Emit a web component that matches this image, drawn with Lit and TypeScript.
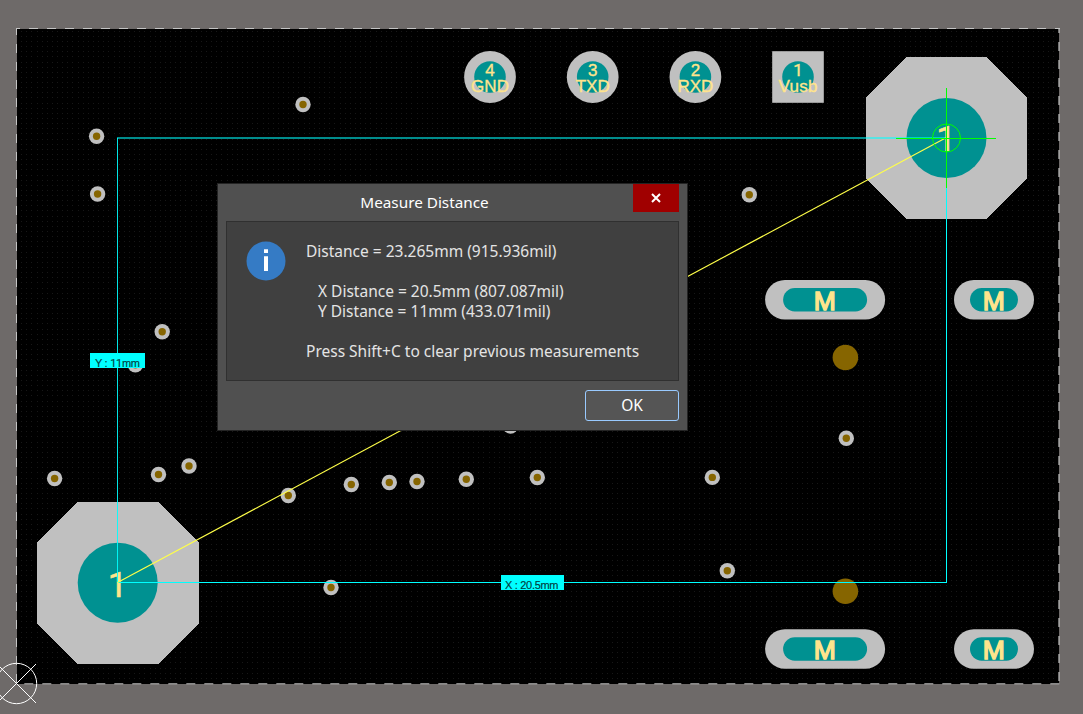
import { LitElement, html, svg, css } from "lit";
import { customElement } from "lit/decorators.js";

const VIAS: [number, number][] = [
  [303, 104.5], [96.6, 136.3], [97.6, 194], [749.3, 194.8], [162.2, 331.7],
  [135.4, 364.8], [510.5, 426], [846.3, 438.3], [54.6, 478.5], [158.5, 474.5],
  [189, 466], [288.3, 495.5], [351.3, 484.5], [389.3, 482.5], [417, 481.5],
  [466.3, 479.3], [537.3, 477.5], [712.3, 477.4], [727.3, 570.7], [331, 587.5],
];

const SLOTS: [number, number, number, number][] = [
  [825.1, 299.7, 120, 84], [994, 299.7, 80, 48],
  [825.1, 649, 120, 84], [994, 649, 80, 48],
];

const HEADER = [
  { x: 490, n: "4", name: "GND", w: 38 },
  { x: 592.7, n: "3", name: "TXD", w: 34 },
  { x: 695.4, n: "2", name: "RXD", w: 36 },
  { x: 798, n: "1", name: "Vusb", w: 39 },
];

// 5 mil snap grid, measured from the board origin
function gridPath(): string {
  const step = 5.136;
  let d = "";
  for (let j = 1; j < 128; j++) {
    const y = Math.floor(683.5 - j * step) + 0.5;
    if (y < 29) break;
    for (let i = 1; i < 203; i++) {
      d += `M${Math.floor(16.5 + i * step)} ${y}h1`;
    }
  }
  return d;
}

@customElement("pcb-board")
export class PcbBoard extends LitElement {
  static styles = css`
    :host { display: block; }
    svg { display: block; }
    text { font-family: "Liberation Sans", Arial, sans-serif; }
    .label { fill: #ffe48c; stroke: #ffe48c; stroke-width: 0.35; font-size: 17px; text-anchor: middle; }
    .slot { fill: #ffe48c; stroke: #ffe48c; stroke-width: 1.4; font-size: 26.5px; text-anchor: middle; }
    .big { fill: #ffe48c; stroke: #ffe48c; stroke-width: 0.5; font-size: 35px; }
    .one { font-family: Roboto, sans-serif; }
    .dim { fill: #003c3c; stroke: #003c3c; stroke-width: 0.15; font-size: 11px; }
    .copper { fill: #c0c0c0; }
    .hole { fill: #009191; }
    .drill { fill: #866500; }
    .edge { stroke: #c4c4c4; stroke-dasharray: 9 9; fill: none; }
    .measure { stroke: #00ffff; fill: none; }
    .cursor { stroke: #00ff00; fill: none; }
    .origin { stroke: #ffffff; fill: none; }
  `;

  render() {
    return html`
      <svg width="1083" height="714" viewBox="0 0 1083 714">
        <rect width="1083" height="714" fill="#6e6a69"></rect>
        <rect x="17" y="29" width="1042" height="655" fill="#000"></rect>
        <path d=${gridPath()} stroke="#171717" shape-rendering="crispEdges"></path>

        <path class="edge" d="M16 28.5H1060" stroke-dashoffset="5"></path>
        <path class="edge" d="M16.5 28V684" stroke-dashoffset="2"></path>
        <path class="edge" d="M24.3 683.8H1060"></path>
        <path class="edge" d="M1059 28V684" stroke-dashoffset="4" stroke-width="1.6" stroke-opacity="0.75"></path>

        ${VIAS.map(([x, y]) => svg`
          <circle class="copper" cx=${x} cy=${y} r="7.7"></circle>
          <circle class="drill" cx=${x} cy=${y} r="3.7"></circle>`)}
        <circle class="drill" cx="845.4" cy="357.5" r="12.8"></circle>
        <circle class="drill" cx="845.4" cy="591.2" r="12.8"></circle>

        ${HEADER.map((p) => svg`
          ${p.n === "1"
            ? svg`<rect class="copper" x="772.2" y="51.2" width="51.6" height="51.6"></rect>`
            : svg`<circle class="copper" cx=${p.x} cy="77" r="25.9"></circle>`}
          <circle class="hole" cx=${p.x} cy="77" r="15.8"></circle>
          <text class=${p.n === "1" ? "label one" : "label"} x=${p.x} y="75.8">${p.n}</text>
          <text class="label" x=${p.x} y="91.6" textLength=${p.w}>${p.name}</text>`)}

        ${SLOTS.map(([x, y, w, h]) => svg`
          <rect class="copper" x=${x - w / 2} y=${y - 19.8} width=${w} height="39.6" rx="19.8"></rect>
          <rect class="hole" x=${x - h / 2} y=${y - 11.7} width=${h} height="23.4" rx="11.7"></rect>
          <text class="slot" x=${x - 0.3} y=${y + 10.4}>M</text>`)}

        <path class="copper" shape-rendering="crispEdges" d="M906.5 57H986.5L1027 97.5V178.5L986.5 219H906.5L866 178.5V97.5Z"></path>
        <circle class="hole" cx="946.5" cy="138" r="40"></circle>
        <text class="big one" x="936.2" y="151">1</text>
        <path class="copper" shape-rendering="crispEdges" d="M77.5 502H158.5L199 542.5V623.5L158 664H77.5L37 624V542.5Z"></path>
        <circle class="hole" cx="117.7" cy="582.7" r="40"></circle>
        <text class="big one" x="107.7" y="597">1</text>

        <path class="measure" d="M117 138H946" stroke-opacity="0.55" stroke-width="2"></path>
        <path class="measure" d="M117.5 138V582" stroke-opacity="0.9"></path>
        <path class="measure" d="M946.5 138V583M118 582.5H947"></path>
        <path d="M117.5 582.6L946 137.8" stroke="#ffff48" stroke-width="1.15"></path>

        <rect x="90" y="353" width="55" height="15" fill="#0ff"></rect>
        <text class="dim" x="95" y="367" textLength="45">Y : <tspan class="one">11</tspan>mm</text>
        <rect x="501" y="575" width="63" height="15" fill="#0ff"></rect>
        <text class="dim" x="505" y="589" textLength="53.5">X : 20.5mm</text>

        <path class="cursor" d="M946.5 88V188M896 138.5H996"></path>
        <circle class="cursor" cx="946.5" cy="138" r="14"></circle>
        <circle class="origin" cx="16.5" cy="683.5" r="20.2"></circle>
        <path class="origin" d="M-3 664L36 703M-3 703L36 664"></path>
      </svg>
    `;
  }
}

@customElement("measure-dialog")
export class MeasureDialog extends LitElement {
  static styles = css`
    :host {
      display: flex;
      flex-direction: column;
      box-sizing: border-box;
      width: 471px;
      height: 248px;
      border: 1px solid #242424;
      background: #505050;
      color: #fff;
      font: 15.5px/20px "Noto Sans", sans-serif;
    }
    .bar { display: flex; height: 37px; padding-right: 8px; }
    .title { flex: 1; padding: 8px 2px 0 0; text-align: center; font-size: 15.3px; }
    .close { display: flex; align-items: center; justify-content: center; width: 46px; height: 28px; background: #a00000; }
    .body {
      display: flex;
      box-sizing: border-box;
      height: 160px;
      margin: 0 8px;
      padding: 19px;
      gap: 20px;
      border: 1px solid #303030;
      background: #404040;
      color: #e4e4e4;
    }
    .icon { flex: none; width: 40px; height: 40px; }
    .lines { display: flex; flex-direction: column; white-space: nowrap; }
    .lines p { margin: 0; height: 20px; }
    .lines .gap { margin-bottom: 20px; }
    .lines .sub { padding-left: 12px; }
    .foot { display: flex; justify-content: flex-end; padding: 9px 8px 0; }
    .ok {
      box-sizing: border-box;
      width: 94px;
      height: 31px;
      padding: 0 0 2px;
      border: 1px solid #99caff;
      border-radius: 3px;
      background: #555;
      color: #fff;
      font: inherit;
    }
  `;

  render() {
    return html`
      <div class="bar">
        <div class="title">Measure Distance</div>
        <div class="close">
          <svg width="10" height="10" viewBox="0 0 10 10"><path d="M1 1L9 9M9 1L1 9" stroke="#fff" stroke-width="2"></path></svg>
        </div>
      </div>
      <div class="body">
        <svg class="icon" viewBox="0 0 40 40">
          <circle cx="20" cy="20" r="19.5" fill="#357bc5"></circle>
          <path d="M18 8.3h4v3.7h-4zM18 15.3h4v14.7h-4z" fill="#fff"></path>
        </svg>
        <div class="lines">
          <p class="gap">Distance = 23.265mm (915.936mil)</p>
          <p class="sub">X Distance = 20.5mm (807.087mil)</p>
          <p class="sub gap">Y Distance = 11mm (433.071mil)</p>
          <p>Press Shift+C to clear previous measurements</p>
        </div>
      </div>
      <div class="foot"><button class="ok">OK</button></div>
    `;
  }
}

@customElement("app-root")
export class AppRoot extends LitElement {
  static styles = css`
    :host { display: block; position: relative; width: 1083px; height: 714px; overflow: hidden; }
    .dialog { position: absolute; left: 217px; top: 183px; }
  `;

  render() {
    return html`
      <pcb-board></pcb-board>
      <measure-dialog class="dialog"></measure-dialog>
    `;
  }
}
